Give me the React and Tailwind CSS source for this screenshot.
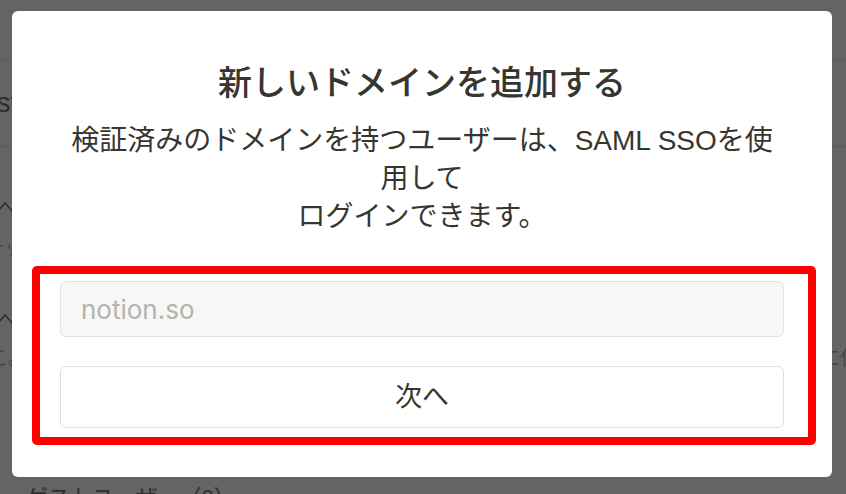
import React from "react";

const jp = "font-['Liberation_Sans','Noto_Sans_CJK_JP',sans-serif]";

function Chevron() {
  return (
    <svg width="16" height="12" viewBox="0 0 16 12" className="-ml-[3px]">
      <polyline points="1,11 8,3 15,11" fill="none" stroke="#2e2e2e" strokeWidth="1.6" />
    </svg>
  );
}

function BackgroundPage() {
  return (
    <div className={`flex flex-col text-[#2e2e2e] ${jp}`}>
      <div className="h-[60px] border-b border-[#595959]" />
      <div className="h-[87px] border-b border-[#595959] flex items-center">
        <span className="-ml-[33px] text-[28px] leading-none">Test</span>
      </div>
      <div className="pt-[53px] flex flex-col">
        <Chevron />
        <span className="mt-[24px] -ml-[16px] text-[20px] leading-[24px] text-[#444]">テッ：</span>
      </div>
      <div className="pt-[52px] flex flex-col">
        <Chevron />
        <div className="mt-[22px] flex justify-between text-[20px] leading-[24px] text-[#444]">
          <span className="-ml-[12px]">こ。</span>
          <span className="-mr-[14px]">に仏</span>
        </div>
      </div>
      <div className="mt-[116px] pl-[26px] text-[22px] leading-[24px]">ゲストユーザー（0）</div>
    </div>
  );
}

export default function App() {
  return (
    <div className="relative h-[494px] w-full overflow-hidden bg-[#646464]">
      <BackgroundPage />

      <div
        className={`absolute left-[12px] top-[11px] w-[820px] h-[466px] rounded-[6px] bg-white flex flex-col items-center pt-[52px] text-[#37352f] ${jp}`}
      >
        <h2 className="text-[34px] leading-[40px] font-medium">新しいドメインを追加する</h2>
        <p className="mt-[19px] text-[28px] leading-[38px] text-center">
          検証済みのドメインを持つユーザーは、SAML SSOを使
          <br />
          用して
          <br />
          ログインできます。
        </p>

        <div className="mt-[30px] self-start ml-[20px] w-[784px] rounded-[5px] border-[8px] border-[#ff0000] pt-[7px] pb-[9px] pl-[20px] pr-[24px] flex flex-col gap-[29px]">
          <input
            readOnly
            placeholder="notion.so"
            className="h-[56px] w-full rounded-[6px] border border-[#e2e2e0] bg-[#f7f7f5] px-[20px] text-[26px] font-['Inter',sans-serif] text-[#37352f] placeholder:text-[#b3b3b1] outline-none"
          />
          <button className="h-[62px] w-full rounded-[6px] border border-[#e0e0e0] bg-white text-[27px] text-[#37352f]">
            次へ
          </button>
        </div>
      </div>
    </div>
  );
}
